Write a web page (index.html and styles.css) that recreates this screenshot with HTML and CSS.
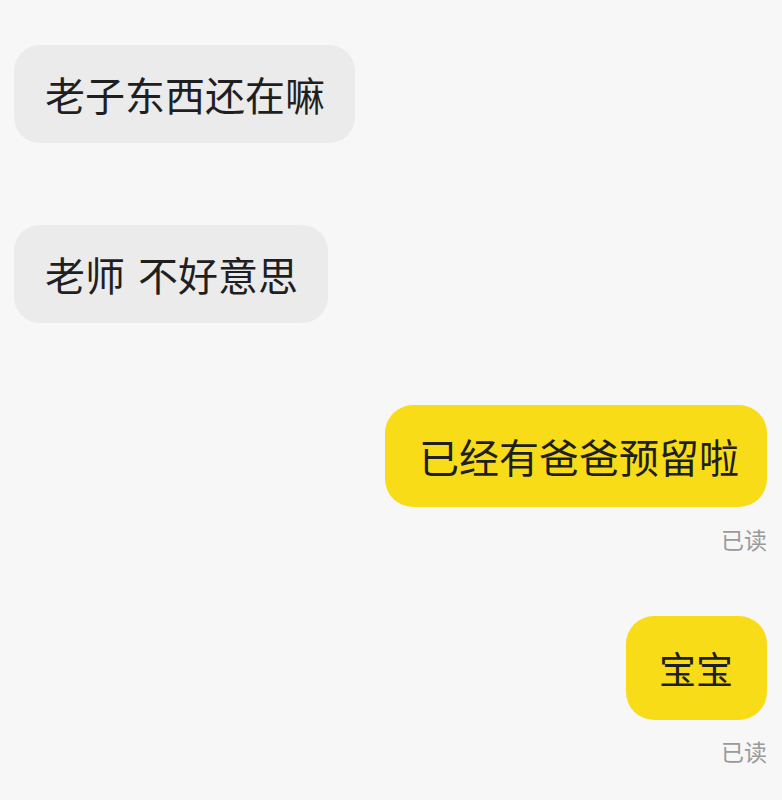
FILE: index.html
```html
<!DOCTYPE html>
<html lang="zh-CN">
<head>
    <meta charset="UTF-8">
    <meta name="viewport" content="width=device-width, initial-scale=1.0">
    <title>聊天</title>
    <link rel="stylesheet" href="styles.css">
</head>
<body>
    <div class="chat">
        <div class="msg msg-in">
            <div class="bubble">老子东西还在嘛</div>
        </div>
        <div class="msg msg-in">
            <div class="bubble">老师 不好意思</div>
        </div>
        <div class="msg msg-out">
            <div class="bubble">已经有爸爸预留啦</div>
            <div class="status">已读</div>
        </div>
        <div class="msg msg-out">
            <div class="bubble bubble-short">宝宝</div>
            <div class="status">已读</div>
        </div>
    </div>
</body>
</html>
```

FILE: styles.css
```css
body {
    margin: 0;
    background: #f7f7f7;
    font-family: "Noto Sans CJK SC", "Noto Sans", sans-serif;
    color: #1f1f1f;
}

.chat {
    display: flex;
    flex-direction: column;
    padding: 45px 15px 0 14px;
}

.msg {
    display: flex;
    flex-direction: column;
}

.msg + .msg {
    margin-top: 82px;
}

.msg-in {
    align-items: flex-start;
}

.msg-out {
    align-items: flex-end;
}

.msg-out + .msg-out {
    margin-top: 62px;
}

.bubble {
    font-size: 40px;
    line-height: 40px;
    word-spacing: 4px;
    padding: 29px 30px 29px 31px;
    border-radius: 26px;
}

.msg-in .bubble {
    background: #ebebeb;
}

.msg-out .bubble {
    background: #f8dc17;
    padding: 31px 28px 31px 34px;
    border-radius: 28px;
}

.msg-out .bubble-short {
    font-size: 37px;
    padding: 32px 34px 32px 33px;
}

.status {
    margin-top: 17px;
    font-size: 23px;
    line-height: 30px;
    color: #9a9a9a;
}

.msg-out + .msg-out .status {
    margin-top: 16px;
}
```
